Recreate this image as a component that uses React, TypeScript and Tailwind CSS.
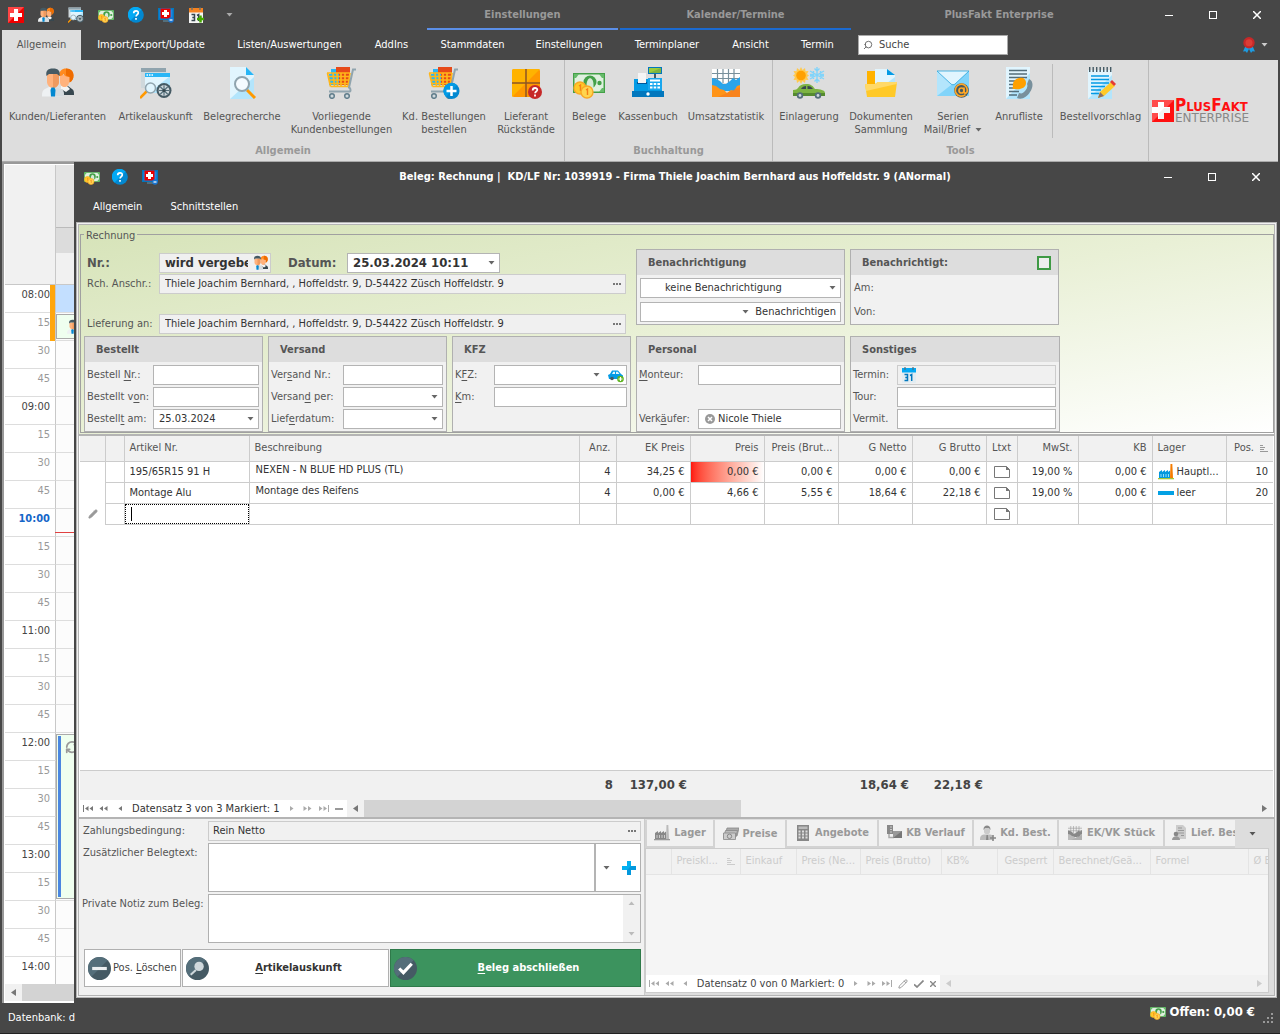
import type { ReactNode } from 'react';
import { RefreshCw, Search, Pencil } from 'lucide-react';

type P = { c?: string };

/* ---------- icons ---------- */

const Svg = ({ c = 'size-8', vb = '0 0 32 32', children }: { c?: string; vb?: string; children: ReactNode }) => (
  <svg viewBox={vb} className={c + ' shrink-0'} aria-hidden="true">{children}</svg>
);

const People = ({ c }: P) => (
  <Svg c={c}>
    <path d="M17 28l3-8 3-1h3l4 3c2 1 2 3 2 6z" fill="#37474f" />
    <path d="M19 19h6l3 3-4 3-5-3z" fill="#f5f5f5" />
    <path d="M18 8h9v7c0 3-2 5-4.500 5S18 18 18 15z" fill="#ffb27d" />
    <path d="M17 9c0-5 3-7.500 7-7.500 5 0 7.500 3 7.500 7 0 3-1 5.500-4 7V10c-3 0-5-1-6-3-1 1.500-2 2-4.500 2z" fill="#ff8a1f" />
    <path d="M24 1.500c5 0 7.500 3 7.500 7 0 3-1 5.500-4 7V10l-3.500-1.500z" fill="#ef6c00" />
    <path d="M0 29.500c0-5 1-7 4-8l4-2h6l4 2c3 1 4 3 4 8z" fill="#eef1f3" />
    <path d="M11 20l3-.5 4 2c3 1 4 3 4 8H11z" fill="#d5dbdf" />
    <path d="M5 7h12v8c0 3-3 6-6 6s-6-3-6-6z" fill="#ffb27d" />
    <path d="M11 7h6v8c0 3-3 6-6 6z" fill="#f09a5f" />
    <path d="M4.500 9C3.500 4 5.500 1.500 11 1.500S18.500 4 17.500 9L15 7H7z" fill="#455a64" />
    <path d="M9.500 20.500h3l1 2.500-.5 6.500h-4L8.500 23z" fill="#0288d1" />
  </Svg>
);

const Wheel = ({ x, y, r }: { x: number; y: number; r: number }) => (
  <g>
    <circle cx={x} cy={y} r={r} fill="#455a64" />
    <circle cx={x} cy={y} r={r * 0.72} fill="#cfd8dc" />
    <path d={`M${x - r * 0.7} ${y}h${r * 1.4}M${x} ${y - r * 0.7}v${r * 1.4}M${x - r * 0.5} ${y - r * 0.5}l${r} ${r}M${x + r * 0.5} ${y - r * 0.5}l${-r} ${r}`} stroke="#546e7a" strokeWidth="1.200" />
    <circle cx={x} cy={y} r={r * 0.2} fill="#37474f" />
  </g>
);

const Article = ({ c }: P) => (
  <Svg c={c}>
    <rect x="1" y="1" width="25" height="20" fill="#cfd8dc" />
    <rect x="1" y="1" width="25" height="4" fill="#90a4ae" />
    <rect x="5" y="6" width="25" height="20" fill="#e1f5fe" />
    <path d="M30 9v17H9z" fill="#b3e5fc" />
    <rect x="5" y="6" width="25" height="4" fill="#29b6f6" />
    <path d="M6.500 8h1.500m1 0h1.500m1 0H13" stroke="#fff" strokeWidth="1.500" />
    <path d="M7 24l-7 7" stroke="#ff9800" strokeWidth="2.500" />
    <circle cx="10.500" cy="21" r="5" fill="#e1f5fe" stroke="#90a4ae" strokeWidth="1.500" />
    <Wheel x={24} y={23.500} r={7.500} />
  </Svg>
);

const DocSearch = ({ c }: P) => (
  <Svg c={c}>
    <path d="M4 0h16l8 8v24H4z" fill="#e1f5fe" />
    <path d="M28 10v22H4z" fill="#b3e5fc" />
    <path d="M20 0l8 8h-8z" fill="#29b6f6" />
    <path d="M21 23l8 8" stroke="#ff9800" strokeWidth="3" />
    <circle cx="16" cy="17" r="7" fill="#f5fbff" stroke="#90a4ae" strokeWidth="2" />
  </Svg>
);

const CartBody = () => (
  <g>
    <path d="M5 2h10v6H5z" fill="#29b6f6" />
    <path d="M10 0h14v8H10z" fill="#e64a19" />
    <rect x="3" y="7" width="12" height="11" fill="#29b6f6" />
    <rect x="13" y="7" width="11" height="11" fill="#e64a19" />
    <path d="M1 6h23M2 9.500h22M3 13h20M4 16.500h19M4.500 19.500h18M1.500 6l3 13.500M7 6l1.500 13M11 6l.5 13M15 6v13M19 6v13M24 6l-2 13.500" stroke="#ffb61a" strokeWidth="1.700" fill="none" />
    <path d="M30 2.500h-3l-4 18c2 1 2 4 0 4H3" stroke="#90a4ae" strokeWidth="2" fill="none" />
    <circle cx="6" cy="29" r="2.300" fill="#cfd8dc" stroke="#607d8b" strokeWidth="1.500" />
    <circle cx="21" cy="29" r="2.300" fill="#cfd8dc" stroke="#607d8b" strokeWidth="1.500" />
  </g>
);
const Cart = ({ c }: P) => <Svg c={c}><CartBody /></Svg>;
const CartPlus = ({ c }: P) => (
  <Svg c={c}>
    <CartBody />
    <circle cx="23.500" cy="24" r="8" fill="#0288d1" />
    <path d="M18 30A8 8 0 0 1 29 18z" fill="#039be5" />
    <path d="M23.500 19v10M18.500 24h10" stroke="#fff" strokeWidth="2.500" />
  </Svg>
);

const BoxQ = ({ c }: P) => (
  <Svg c={c}>
    <rect x="2" y="2" width="28" height="28" rx="2" fill="#ff9800" />
    <path d="M2 30V4a2 2 0 0 1 2-2h26z" fill="#ffb300" />
    <path d="M16 2v28M2 16h28" stroke="#8d5524" strokeWidth="1.500" />
    <circle cx="25" cy="25" r="7" fill="#c62828" />
    <path d="M22.700 23.500c0-3.500 4.800-3 4.600-.5-.2 1.500-2.200 1.500-2.200 3.200M25 27.500v2" stroke="#fff" strokeWidth="1.800" fill="none" />
  </Svg>
);

const Money = ({ c }: P) => (
  <Svg c={c}>
    <rect x="0" y="6" width="32" height="20" fill="#43a047" />
    <rect x="1.500" y="7.500" width="29" height="17" fill="#dff0df" />
    <path d="M1 7h5l-3 4H1zM31 7h-5l3 4h2zM31 25h-5l3-4h2z" fill="#66bb6a" />
    <circle cx="17" cy="15" r="6.500" fill="#43a047" />
    <path d="M13.500 19c0-10 7-10 7-1v3h-7z" fill="#d5ead5" />
    <circle cx="26.500" cy="16" r="2.200" fill="#43a047" />
    <circle cx="7" cy="21" r="6" fill="#ffca28" stroke="#f9a825" strokeWidth="1.400" />
    <path d="M6 19l1.500-1v6" stroke="#f57f17" strokeWidth="1.400" fill="none" />
    <circle cx="14" cy="25" r="6" fill="#ffd54f" stroke="#f9a825" strokeWidth="1.400" />
    <path d="M13 23l1.500-1v6" stroke="#f57f17" strokeWidth="1.400" fill="none" />
  </Svg>
);

const Register = ({ c }: P) => (
  <Svg c={c}>
    <path d="M22 5h2v8h-2z" fill="#455a64" />
    <path d="M16 0h14v7H16z" fill="#0277bd" /><path d="M17 1h12v5H17z" fill="#9ccc3c" /><path d="M29 1v5H17z" fill="#7cb342" />
    <path d="M2 24V12h28v12z" fill="#039be5" />
    <path d="M0 24h32v6H0z" fill="#0277bd" />
    <path d="M16 11h14v12H16z" fill="#1aa7ee" />
    <path d="M18 13.500h10M18 17h2.500m1.200 0h2.500m1.200 0H28M18 20.500h2.500m1.200 0h2.500m1.200 0H28" stroke="#fff" strokeWidth="2" />
    <path d="M5 15h10v2H5z" fill="#01579b" /><path d="M6 6h8v10H6z" fill="#f5f5f5" />
    <circle cx="16" cy="27" r="1.700" fill="#fff" />
  </Svg>
);

const ChartIcon = ({ c, gray }: P & { gray?: boolean }) => (
  <Svg c={c}>
    <path d="M2 2h28v14H2z" fill={gray ? '#eee' : '#fff'} />
    <path d="M2 6.500h28M2 11.500h28M7.500 2v14M13 2v14M18.500 2v14M24 2v14" stroke={gray ? '#999' : '#78909c'} strokeWidth="1.200" />
    <path d="M2 11l4 1 4 2 3 3 3 0 4-3 3-3 3 2 4-3v14H2z" fill={gray ? '#888' : '#29a4ea'} />
    <path d="M2 18l4 1 4 3 4 1 3 3 4-3 3 1 3-5 3-1v12H2z" fill={gray ? '#bbb' : '#ff9418'} />
    <path d="M30 20v10H8z" fill={gray ? '#aaa' : '#f57c1f'} opacity=".7" />
  </Svg>
);

const SunCar = ({ c }: P) => (
  <Svg c={c}>
    <path d="M8 0l1.500 3L12 1l.5 3.300 3-.3-1.500 3 2 1.500-2 1.500 1.500 3-3-.3L12 16l-2.500-2L8 17l-1.500-3L4 16l-.5-3.300-3 .3L2 10 0 8.500 2 7 .5 4l3 .3L4 1l2.500 2z" fill="#ffc94d" />
    <circle cx="8" cy="8.500" r="4.800" fill="#ffa000" />
    <path d="M24 0v16M17 4l14 8M31 4l-14 8M21.500 1.500L24 4l2.500-2.500M21.500 14.500L24 12l2.500 2.500M17 7.500h3.500V4M31 7.500h-3.500V4M17 9h3.500v3M31 9h-3.500v3" stroke="#81d4fa" strokeWidth="1.400" fill="none" />
    <path d="M0 23c3 0 4-1 5-2 2-3 4-4 8-4 5 0 7 2 9 5 5 0 10 1 10 4v3H0z" fill="#7cb342" />
    <path d="M8 22c1-2 3-3 5-3v3zM14.500 19c3 0 4 1 5.500 3h-5.500z" fill="#37474f" />
    <path d="M0 26h32v3H0z" fill="#558b2f" />
    <circle cx="7" cy="28.500" r="3.200" fill="#546e7a" /><circle cx="7" cy="28.500" r="1.400" fill="#cfd8dc" />
    <circle cx="25" cy="28.500" r="3.200" fill="#546e7a" /><circle cx="25" cy="28.500" r="1.400" fill="#cfd8dc" />
  </Svg>
);

const Folder = ({ c }: P) => (
  <Svg c={c}>
    <path d="M2 4h9v24H2z" fill="#ffb300" />
    <path d="M10 2h12l8 6v14H10z" fill="#e1f5fe" /><path d="M30 10v12H14z" fill="#b3e5fc" />
    <path d="M22 2l8 6h-8z" fill="#039be5" />
    <path d="M0 17h10l3-2h19l-2 15H2z" fill="#ffc928" /><path d="M0 17h10l3-2h19l-.3 2L1 24z" fill="#ffd968" />
  </Svg>
);

const Mail = ({ c }: P) => (
  <Svg c={c}>
    <path d="M0 4h32v25H0z" fill="#81d4fa" />
    <path d="M0 29V4l32 0z" fill="#b3e5fc" />
    <path d="M0 4h32L18 17c-1 1-3 1-4 0z" fill="#e1f5fe" stroke="#29a4dc" strokeWidth=".8" />
    <circle cx="24.500" cy="23.500" r="5.800" fill="#455a64" stroke="#455a64" strokeWidth="3" />
    <path d="M28.500 27.500a6 6 0 1 1 1.800-4.500c0 4-3.300 4-3.300 1.500v-4" stroke="#ffa726" strokeWidth="1.700" fill="none" />
    <circle cx="24.500" cy="23.500" r="2.500" fill="none" stroke="#ffa726" strokeWidth="1.700" />
  </Svg>
);

const PhoneList = ({ c }: P) => (
  <Svg c={c}>
    <path d="M3 0h24v32H3z" fill="#e1f5fe" /><path d="M27 6v26H3z" fill="#b3e5fc" />
    <path d="M6 3.500h18M6 7h18M6 10.500h18M6 14h6M6 17.500h5M6 21h6M6 24.500h10M6 28h8" stroke="#546e7a" strokeWidth="1.300" />
    <path d="M16 11c4-1 7 1 7 5 0 5-6 7-11 6-3 0-3-1-2-2-1-5 2-8 6-9z" fill="#ffa000" />
    <path d="M26 12c5 2 4 9 1 13-3 5-8 8-13 6l2-5c3 1 4 0 6-2s3-5 2-7z" fill="#78909c" />
  </Svg>
);

const Notepad = ({ c }: P) => (
  <Svg c={c}>
    <path d="M3 3h24v29H3z" fill="#e1f5fe" /><path d="M27 8v24H3z" fill="#b3e5fc" />
    <path d="M4 2.500h23" stroke="#455a64" strokeWidth="5" strokeDasharray="1.400 2.100" />
    <path d="M6 9h18M6 12.500h18M6 16h18M6 19.500h14M6 23h10M6 26.500h8" stroke="#039be5" strokeWidth="1.300" />
    <path d="M13 31l2-6 11-10 4 4-11 10z" fill="#ffca28" /><path d="M13 31l2-6 4 4z" fill="#8d6e63" />
    <path d="M25 15l2-2 4 4-2 2z" fill="#e53935" />
  </Svg>
);

const Swiss = ({ c }: P) => (
  <Svg c={c} vb="0 0 16 16">
    <path d="M0 0h16v16H0z" fill="#f00000" /><path d="M0 0h16L0 16z" fill="#ff4545" />
    <path d="M6 2h4v4h4v4h-4v4H6v-4H2V6h4z" fill="#fff" />
  </Svg>
);

const Help = ({ c }: P) => (
  <Svg c={c} vb="0 0 16 16">
    <circle cx="8" cy="8" r="7.800" fill="#0288d1" /><path d="M2.500 13.500A7.800 7.800 0 1 1 13.500 2.500z" fill="#03a9f4" />
    <path d="M5.700 6.200c0-3.200 4.800-3 4.600-.3-.1 1.700-2.200 1.700-2.200 3.600M8 11v1.800" stroke="#fff" strokeWidth="1.700" fill="none" />
  </Svg>
);

const MonitorSwiss = ({ c }: P) => (
  <Svg c={c} vb="0 0 16 16">
    <path d="M0 1h16v12H0z" fill="#0277bd" /><path d="M1.500 2.500h13v9h-13z" fill="#1e88e5" />
    <path d="M2.500 1.500h10v10h-10z" fill="#e80000" /><path d="M6 3h3v2h2v3H9v2H6V8H4V5h2z" fill="#fff" />
    <path d="M5 13h6v2H5z" fill="#546e7a" /><circle cx="13" cy="13" r="2.800" fill="#1976d2" /><path d="M11.500 13h3" stroke="#fff" strokeWidth="1.200" />
  </Svg>
);

const CalIcon = ({ c, blue }: P & { blue?: boolean }) => (
  <Svg c={c} vb="0 0 16 16">
    <path d="M1 4h14v12H1z" fill={blue ? '#e3edf2' : '#f5f5f5'} />
    <path d="M1 1h14v4.500H1z" fill={blue ? '#03a9f4' : '#f58220'} />
    <path d="M4 0v3M12 0v3" stroke="#546e7a" strokeWidth="1.200" />
    <path d="M3.500 7.500h3v6h-3m.8-3h2.200M9 8.500l1.700-1v6.500" stroke={blue ? '#0277bd' : '#37474f'} strokeWidth="1.500" fill="none" />
    {!blue && <path d="M12.500 8.500v7M9 12h7" stroke="#43a800" strokeWidth="2.500" />}
  </Svg>
);

const Award = ({ c }: P) => (
  <Svg c={c} vb="0 0 16 16">
    <path d="M4.500 9L2 14.500l2.500-.3L6 16l2-4 2 4 1.500-1.800 2.500.3L11.500 9z" fill="#1e9be0" />
    <circle cx="8" cy="5.700" r="5.700" fill="#c62828" /><circle cx="8" cy="5.700" r="3.500" fill="#db3d36" />
  </Svg>
);

const CarBlue = ({ c }: P) => (
  <Svg c={c} vb="0 0 16 16">
    <path d="M0 8l2-1 2-3.500h6L13 7l2 1.500V12H1z" fill="#039be5" /><path d="M4 7l1.200-2.300H7V7zm4 0V4.700h1.800L11.500 7z" fill="#e1f5fe" />
    <circle cx="4" cy="11.500" r="1.800" fill="#455a64" /><circle cx="12.500" cy="12" r="3.300" fill="#5fb321" />
    <path d="M12.500 10v4M10.500 12h4" stroke="#fff" strokeWidth="1.200" />
  </Svg>
);

const Factory = ({ c, gray }: P & { gray?: boolean }) => (
  <Svg c={c} vb="0 0 16 16">
    <path d="M12.500 0h1.800l.7 14h-3z" fill={gray ? '#bbb' : '#f57c00'} />
    <path d="M1 14V8l3-2v2l3-2v2l3-2v2l2-1.500V14z" fill={gray ? '#888' : '#0398dd'} />
    <path d="M3 10v3m2.500-3v3M8 10v3m2.500-3v3" stroke={gray ? '#ccc' : '#8fdcff'} />
    <path d="M0 14h16v1.300H0z" fill={gray ? '#999' : '#a4c639'} />
  </Svg>
);

const Notes = ({ c }: P) => (
  <Svg c={c} vb="0 0 16 16">
    <path d="M4 2h12l-2 8H2z" fill="#aaa" stroke="#888" strokeWidth=".8" /><path d="M2.500 4.500h12l-2 7H.5z" fill="#bbb" stroke="#888" strokeWidth=".8" />
    <path d="M.5 7h12v6.500H.5z" fill="#ccc" stroke="#888" strokeWidth=".8" /><circle cx="6.500" cy="10.300" r="2.200" fill="none" stroke="#888" />
  </Svg>
);
const Calc = ({ c }: P) => (
  <Svg c={c} vb="0 0 16 16">
    <path d="M2 0h12v16H2z" fill="#888" /><path d="M3.500 1.500h9V4h-9z" fill="#bbb" />
    <path d="M3.500 6.500h9m-9 3h9m-9 3h9" stroke="#ddd" strokeWidth="1.800" strokeDasharray="2 1.500" />
  </Svg>
);
const Flow = ({ c }: P) => (
  <Svg c={c} vb="0 0 16 16">
    <path d="M1 0h6v9H1z" fill="#888" /><path d="M4 2h2m-2 2.500h2m-2 2.500h2" stroke="#ccc" /><path d="M3 9v3.500h5" stroke="#aaa" strokeWidth="1.500" fill="none" />
    <path d="M7 6h9v7H7z" fill="#999" /><path d="M16 6v7H7z" fill="#777" />
  </Svg>
);
const PersonAdd = ({ c }: P) => (
  <Svg c={c} vb="0 0 16 16">
    <path d="M4 3h6v4c0 3-6 3-6 0z" fill="#ccc" /><path d="M3.500 5c-.5-6 7.500-6 7 0l-1.500-2h-4z" fill="#888" />
    <path d="M0 15c0-4 1-5 4-5.500h6c3 .5 3.500 1.500 3.500 5.500z" fill="#bbb" /><path d="M6.500 10h1.400l.5 5H6z" fill="#888" />
    <path d="M13 10v6M10 13h6" stroke="#888" strokeWidth="1.600" />
  </Svg>
);
const DocPerson = ({ c }: P) => (
  <Svg c={c} vb="0 0 16 16">
    <path d="M5 0h7l3 3v11H5z" fill="#ccc" /><path d="M7 3h4M7 5.500h6M7 8h6m-3 2.500h3" stroke="#999" />
    <circle cx="5" cy="9" r="2.300" fill="#888" /><path d="M1 15c0-5 8-5 8 0z" fill="#999" />
  </Svg>
);

const LogoMark = ({ c }: P) => (
  <Svg c={c} vb="0 0 22 22">
    <path d="M0 0h22v22H0z" fill="#ff1010" /><path d="M0 0h22L0 22z" fill="#ff4c4c" />
    <path d="M6 2h6v5h6v6h-6v6H6v-6H0V7h6z" fill="#fff" /><path d="M12 8h6v5h-6v6H7v-6z" fill="#e9e9e9" opacity=".6" />
  </Svg>
);

const Down = ({ c = 'fill-[#666]' }: P) => (
  <svg viewBox="0 0 7 4" className={'h-1 w-[7px] shrink-0 ' + c} aria-hidden="true"><path d="M.5 0h6L3.500 3.500z" /></svg>
);
const Tri = ({ left, c = 'fill-[#777]' }: P & { left?: boolean }) => (
  <svg viewBox="0 0 5 7" className={'h-[7px] w-[5px] shrink-0 ' + c} aria-hidden="true"><path d={left ? 'M5 0v7L0 3.500z' : 'M0 0v7l5-3.500z'} /></svg>
);
const Nav = ({ kind, c = 'fill-[#777]' }: P & { kind: 'first' | 'prevp' | 'prev' | 'next' | 'nextp' | 'last' }) => {
  const d = {
    first: 'M0 0h1v7H0zM5.500 1v5L2 3.500zM10 1v5L6.500 3.500z',
    prevp: 'M4 1v5L.5 3.500zM8.500 1v5L5 3.500z',
    prev: 'M6 1v5L2.500 3.500z',
    next: 'M4 1v5l3.500-2.500z',
    nextp: 'M1.500 1v5L5 3.500zM6 1v5l3.500-2.500z',
    last: 'M0 1v5l3.500-2.500zM4.500 1v5L8 3.500zM9 0h1v7H9z',
  }[kind];
  return <svg viewBox="0 0 10 7" className={'h-[7px] w-[10px] ' + c} aria-hidden="true"><path d={d} /></svg>;
};
const SortIcon = () => (
  <svg viewBox="0 0 8 7" className="h-[7px] w-2 shrink-0 stroke-current" aria-hidden="true"><path d="M0 .5h3M0 2.500h5M0 4.500h4M0 6.500h8" /></svg>
);

/* ---------- controls ---------- */

const WinButtons = () => (
  <div className="flex h-full items-center">
    <button aria-label="Minimieren" className="flex h-full w-11 items-center justify-center"><span className="h-px w-2 bg-white" /></button>
    <button aria-label="Maximieren" className="flex h-full w-11 items-center justify-center"><span className="size-2 border border-white" /></button>
    <button aria-label="Schließen" className="flex h-full w-11 items-center justify-center">
      <svg viewBox="0 0 8 8" className="size-2 stroke-white" aria-hidden="true"><path d="M0 0l8 8M8 0L0 8" strokeWidth="1.500" /></svg>
    </button>
  </div>
);

const U = ({ t, u, r }: { t?: string; u: string; r: string }) => <>{t}<u className="underline-offset-2">{u}</u>{r}</>;

const Field = ({ id, label, lw, value, combo }: { id: string; label: ReactNode; lw: string; value?: string; combo?: boolean }) => (
  <div className="flex h-5 items-center">
    <label htmlFor={id} className={'shrink-0 whitespace-nowrap text-[#555] ' + lw}>{label}</label>
    {combo ? (
      <span className="relative flex min-w-0 flex-1">
        <select id={id} defaultValue={value} className="h-5 w-full appearance-none border border-[#b4b4b4] bg-white px-[5px]">
          <option>{value}</option>
        </select>
        <span className="pointer-events-none absolute top-2 right-[5px]"><Down /></span>
      </span>
    ) : (
      <input id={id} defaultValue={value} className="h-5 min-w-0 flex-1 border border-[#b4b4b4] bg-white px-[5px]" />
    )}
  </div>
);

const Panel = ({ title, w, extra, children }: { title: string; w: string; extra?: ReactNode; children: ReactNode }) => (
  <section className={'shrink-0 border border-[#b0b0b0] bg-[#f1f1f1] ' + w}>
    <div className="flex h-[25px] items-center justify-between bg-[#ddd] pr-[7px] pl-[11px] font-bold text-[#555]"><h2>{title}</h2>{extra}</div>
    {children}
  </section>
);

const RibbonItem = ({ w, icon, lines, drop }: { w: string; icon: ReactNode; lines: string[]; drop?: boolean }) => (
  <button className={'flex flex-col items-center pt-[7px] leading-[13px] whitespace-nowrap text-[#555] ' + w}>
    {icon}
    <span className="mt-[11px]">{lines[0]}</span>
    {lines[1] && <span className="flex items-center gap-[5px]">{lines[1]}{drop && <Down />}</span>}
  </button>
);

const RibbonGroup = ({ title, children, c = '' }: { title: string; children: ReactNode; c?: string }) => (
  <section className={'flex flex-col border-r border-[#bbb] ' + c}>
    <div className="flex h-[84px]">{children}</div>
    <h2 className="text-center leading-[14px] font-bold text-[#999]">{title}</h2>
  </section>
);

const AddressRow = ({ id, label, value }: { id: string; label: string; value: string }) => (
  <div className="flex items-center">
    <label htmlFor={id} className="w-[72px] shrink-0 whitespace-nowrap text-[#555]">{label}</label>
    <div className="flex h-5 min-w-0 flex-1 items-center border border-[#ccc] bg-[#f0f0f0] pr-1">
      <input id={id} defaultValue={value} readOnly className="min-w-0 flex-1 px-[5px]" />
      <button aria-label={label + ' auswählen'} className="flex gap-px">
        <i className="size-0.5 bg-[#777]" /><i className="size-0.5 bg-[#777]" /><i className="size-0.5 bg-[#777]" />
      </button>
    </div>
  </div>
);

/* ---------- calendar strip ---------- */

const hours = ['08:00', '09:00', '10:00', '11:00', '12:00', '13:00', '14:00'];
const slots = hours.flatMap((h) => (h === '14:00' ? [h] : [h, '15', '30', '45']));

const Calendar = () => (
  <aside className="flex w-[72px] shrink-0 flex-col overflow-hidden border-t-2 border-l-2 border-[#999] bg-white pt-px pl-px">
    <div className="flex h-[120px] shrink-0">
      <div className="w-[51px] border-r border-b border-[#c8c8c8] bg-[#f1f1f1]" />
      <div className="flex flex-1 flex-col border-b border-[#c8c8c8] bg-[#f1f1f1]">
        <div className="h-[63px] border-b border-[#bbb] bg-[#e4e4e4]" />
        <div className="h-[25px] bg-[#dcdcdc]" />
      </div>
    </div>
    <div className="relative h-[699px] shrink-0 overflow-hidden">
      {slots.map((s, i) => {
        const full = s.length > 2;
        const now = s === '10:00';
        return (
          <div key={i} className="flex h-7">
            <div className={'w-[51px] border-r border-b border-r-[#c8c8c8] border-b-[#ddd] pt-0.5 pr-[5px] text-right ' + (now ? 'font-bold text-[#1566c8]' : full ? 'text-[#444]' : 'text-[#999]')}>{s}</div>
            <div className={'flex-1 border-b border-[#ddd] ' + (i === 0 ? 'bg-[#c3dfff]' : 'bg-[#fcfcfc]')} />
          </div>
        );
      })}
      <div className="absolute top-0 left-[45px] h-14 w-[5px] bg-[#ffa60d]" />
      <div className="absolute top-[29px] left-[51px] h-[25px] w-10 overflow-hidden border border-[#aaa] bg-[#efffef] pt-1 pl-2.5"><People c="size-4" /></div>
      <div className="absolute top-[247px] left-[50px] h-px w-10 bg-[#e04040]" />
      <div className="absolute top-[449px] left-[51px] flex h-[165px] w-10 border border-[#aaa] bg-[#efffef] py-px pl-px">
        <span className="w-[3px] bg-[#4a86e0]" />
        <RefreshCw className="mt-1 ml-1 size-3.5 shrink-0 text-[#999]" strokeWidth={3} />
      </div>
    </div>
    <div className="flex h-[17px] items-center bg-[#d3d3d3]"><span className="flex h-full w-[17px] items-center justify-center bg-[#f1f1f1]"><Tri left /></span></div>
    <div className="h-0.5 bg-white" />
  </aside>
);

/* ---------- positions table ---------- */

const cols: [string, string, string][] = [
  ['', 'w-[25px]', 'l'], ['', 'w-[19px]', 'l'], ['Artikel Nr.', 'w-[125px]', 'l'], ['Beschreibung', '', 'l'], ['Anz.', 'w-[37px]', 'r'],
  ['EK Preis', 'w-[74px]', 'r'], ['Preis', 'w-[74px]', 'r'], ['Preis (Brut...', 'w-[74px]', 'r'], ['G Netto', 'w-[74px]', 'r'], ['G Brutto', 'w-[74px]', 'r'],
  ['Ltxt', 'w-[31px]', 'c'], ['MwSt.', 'w-[61px]', 'r'], ['KB', 'w-[74px]', 'r'], ['Lager', 'w-[74px]', 'l'], ['Pos.', 'w-[47px]', 'r'],
];
const align: Record<string, string> = { l: 'text-left', r: 'text-right', c: 'text-center' };

const rows = [
  ['195/65R15 91 H', 'NEXEN - N BLUE HD PLUS (TL)', '4', '34,25 €', '0,00 €', '0,00 €', '0,00 €', '0,00 €', '', '19,00 %', '0,00 €', 'Hauptl...', '10'],
  ['Montage Alu', 'Montage des Reifens', '4', '0,00 €', '4,66 €', '5,55 €', '18,64 €', '22,18 €', '', '19,00 %', '0,00 €', 'leer', '20'],
  ['', '', '', '', '', '', '', '', '', '', '', '', ''],
];

const ColGroup = () => <colgroup>{cols.map((c, i) => <col key={i} className={c[1]} />)}</colgroup>;

const Note = () => (
  <svg viewBox="0 0 16 12" className="mx-auto h-3 w-4" aria-hidden="true"><path d="M.5.5h12l3 3v8H.5z" fill="#fff" stroke="#777" /><path d="M12 0l4 4h-4z" fill="#777" /></svg>
);

const Positions = () => (
  <div className="flex flex-1 flex-col border-t-2 border-[#b4b4b4] bg-white px-px">
    <table className="w-full table-fixed border-collapse">
      <ColGroup />
      <thead>
        <tr className="h-[25px] bg-[#f1f1f1] text-[#555]">
          {cols.map(([t, , a], i) => (
            <th key={i} className={'overflow-hidden border-r border-b border-[#ccc] font-normal whitespace-nowrap last:border-r-0 ' + align[a] + (t === 'Ltxt' ? ' px-0' : ' px-[5px]')}>
              {t === 'Pos.' ? <span className="flex items-center justify-end gap-1.5 text-[#999]"><span className="text-[#555]">Pos.</span><SortIcon /></span> : t}
            </th>
          ))}
        </tr>
      </thead>
      <tbody>
        {rows.map((r, ri) => (
          <tr key={ri} className="h-[21px] text-[#333]">
            <td className="border-r border-[#ccc]">{ri === 2 && <Pencil className="ml-2 size-2.5 fill-[#999] text-[#999]" />}</td>
            <td className="border-r border-b border-[#ccc]" />
            {r.map((v, i) => {
              const a = cols[i + 2][2];
              return (
                <td
                  key={i}
                  className={
                    'overflow-hidden border-r border-b border-[#ccc] py-0 whitespace-nowrap last:border-r-0 ' + align[a] +
                    (i === 0 && ri === 2 ? ' p-0' : i === 1 ? ' px-1.5 pb-[3px]' : ' px-[5px]') +
                    (i === 4 && ri === 0 ? ' bg-linear-to-r from-[#f00] to-white bg-origin-border bg-no-repeat' : '')
                  }
                >
                  {i === 8 ? <Note /> : i === 11 && v ? (
                    <span className="flex items-center gap-[3px]">{ri === 0 ? <Factory c="size-4" /> : <span className="h-1 w-4 bg-[#03a1e4]" />}{v}</span>
                  ) : i === 0 && ri === 2 ? (
                    <span className="flex h-5 items-center border border-dotted border-black pl-[5px]"><span className="h-3.5 w-px bg-black" /></span>
                  ) : v}
                </td>
              );
            })}
          </tr>
        ))}
      </tbody>
    </table>
    <div className="flex-1" />
    <table className="w-full table-fixed border-collapse bg-[#f1f1f1]">
      <ColGroup />
      <tbody>
        <tr className="h-[30px] border-t border-[#ccc] text-[13px] font-bold text-[#444]">
          <td /><td /><td /><td />
          <td className="px-[3px] text-right">8</td>
          <td className="px-[3px] text-right whitespace-nowrap">137,00 €</td>
          <td /><td />
          <td className="px-[3px] text-right whitespace-nowrap">18,64 €</td>
          <td className="px-[3px] text-right whitespace-nowrap">22,18 €</td>
          <td /><td /><td /><td /><td />
        </tr>
      </tbody>
    </table>
    <div className="flex h-[17px] bg-[#f1f1f1]">
      <div className="flex w-[267px] shrink-0 items-center justify-between bg-white pr-1 pl-[3px] whitespace-nowrap text-[#333]">
        <button aria-label="Erster Datensatz"><Nav kind="first" /></button>
        <button aria-label="Vorherige Seite"><Nav kind="prevp" /></button>
        <button aria-label="Vorheriger Datensatz"><Nav kind="prev" /></button>
        <span>Datensatz 3 von 3 Markiert: 1</span>
        <button aria-label="Nächster Datensatz"><Nav kind="next" c="fill-[#aaa]" /></button>
        <button aria-label="Nächste Seite"><Nav kind="nextp" c="fill-[#aaa]" /></button>
        <button aria-label="Letzter Datensatz"><Nav kind="last" c="fill-[#aaa]" /></button>
        <button aria-label="Datensatz löschen" className="h-0.5 w-2 bg-[#999]" />
      </div>
      <div className="flex flex-1 items-center justify-between pr-1.5">
        <span className="flex h-full w-[17px] items-center justify-center"><Tri left /></span>
        <div className="flex h-full flex-1"><div className="h-full w-[42%] bg-[#d3d3d3]" /></div>
        <Tri />
      </div>
    </div>
  </div>
);

/* ---------- detail tabs ---------- */

const tabs: [string, string, ReactNode][] = [
  ['Lager', 'w-[68px]', <Factory c="size-4" gray />],
  ['Preise', 'w-[72px]', <Notes c="size-4" />],
  ['Angebote', 'w-[92px]', <Calc c="size-4" />],
  ['KB Verlauf', 'w-[95px]', <Flow c="size-4" />],
  ['Kd. Best.', 'w-[85px]', <PersonAdd c="size-4" />],
  ['EK/VK Stück', 'w-[106px]', <ChartIcon c="size-4" gray />],
  ['Lief. Best.', 'w-[90px]', <DocPerson c="size-4" />],
];
const priceCols: [string, string][] = [
  ['', 'w-[25px]'], ['Preiskl...', 'w-[69px]'], ['Einkauf', 'w-14'], ['Preis (Ne...', 'w-16'], ['Preis (Brutto)', 'w-[81px]'],
  ['KB%', 'w-14'], ['Gesperrt', 'w-14'], ['Berechnet/Geä...', 'w-[97px]'], ['Formel', 'w-[98px]'], ['Ø E', ''],
];

const Details = () => (
  <section className="flex min-w-0 flex-1 flex-col border-l border-[#ccc] bg-[#ddd] pr-[5px] pb-0.5">
    <div className="flex h-[29px] items-stretch pt-px">
      <div role="tablist" className="flex w-[590px] overflow-hidden">
        {tabs.map(([t, w, icon]) => (
          <button
            key={t}
            role="tab"
            aria-selected={t === 'Preise'}
            className={'flex shrink-0 items-center justify-center gap-1 border-l-2 border-[#d3d3d3] bg-[#f1f1f1] font-bold whitespace-nowrap text-[#999] ' + (t === 'Preise' ? '' : 'border-b-2 ') + w}
          >
            {icon}{t}
          </button>
        ))}
      </div>
      <button aria-label="Weitere Register" className="flex flex-1 items-center justify-center"><Down c="fill-[#555]" /></button>
    </div>
    <div className="flex flex-1 flex-col border border-[#ccc] bg-[#f5f5f5]">
      <table className="w-full table-fixed border-collapse">
        <colgroup>{priceCols.map((c, i) => <col key={i} className={c[1]} />)}</colgroup>
        <thead>
          <tr className="h-[25px] bg-[#f1f1f1] text-[#ccc]">
            {priceCols.map(([t], i) => (
              <th key={i} className={'overflow-hidden border-r border-b border-[#e4e4e4] px-[5px] font-normal whitespace-nowrap last:border-r-0 ' + (t === 'Gesperrt' ? 'text-right' : 'text-left')}>
                {t === 'Preiskl...' ? <span className="flex items-center justify-between">{t}<SortIcon /></span> : t}
              </th>
            ))}
          </tr>
        </thead>
      </table>
      <div className="flex-1" />
      <div className="flex h-[17px] bg-[#f1f1f1]">
        <div className="flex w-[294px] shrink-0 items-center justify-between bg-white pr-1 pl-[3px] whitespace-nowrap text-[#444]">
          <button aria-label="Erster Preis"><Nav kind="first" c="fill-[#aaa]" /></button>
          <button aria-label="Vorherige Preisseite"><Nav kind="prevp" c="fill-[#aaa]" /></button>
          <button aria-label="Vorheriger Preis"><Nav kind="prev" c="fill-[#aaa]" /></button>
          <span>Datensatz 0 von 0 Markiert: 0</span>
          <button aria-label="Nächster Preis"><Nav kind="next" c="fill-[#aaa]" /></button>
          <button aria-label="Nächste Preisseite"><Nav kind="nextp" c="fill-[#aaa]" /></button>
          <button aria-label="Letzter Preis"><Nav kind="last" c="fill-[#aaa]" /></button>
          <button aria-label="Bearbeiten"><Pencil className="size-2.5 text-[#888]" /></button>
          <button aria-label="Übernehmen"><svg viewBox="0 0 10 8" className="h-2 w-2.5 fill-none stroke-[#888]" aria-hidden="true"><path d="M0 4.500l3 2.500L9.500.5" strokeWidth="1.700" /></svg></button>
          <button aria-label="Verwerfen"><svg viewBox="0 0 6 6" className="size-1.5 stroke-[#888]" aria-hidden="true"><path d="M0 0l6 6M6 0L0 6" strokeWidth="1.400" /></svg></button>
        </div>
        <div className="flex flex-1 items-center justify-between px-1.5"><Tri left c="fill-[#ccc]" /><Tri c="fill-[#ccc]" /></div>
      </div>
    </div>
  </section>
);

/* ---------- lower left form ---------- */

const Badge = ({ children }: { children: ReactNode }) => (
  <svg viewBox="0 0 22 22" className="size-[23px] shrink-0" aria-hidden="true">
    <circle cx="11" cy="11" r="11" fill="#455a64" /><path d="M3.200 18.800A11 11 0 0 1 18.800 3.200z" fill="#546e7a" />{children}
  </svg>
);

const Closing = () => (
  <form className="flex w-[565px] shrink-0 flex-col gap-0.5 px-[3px] pt-0.5" onSubmit={(e) => e.preventDefault()}>
    <div className="flex h-5">
      <label htmlFor="zahlung" className="w-[126px] shrink-0 pl-px leading-5 text-[#555]">Zahlungsbedingung:</label>
      <div className="flex flex-1 items-center border border-[#ccc] bg-[#f1f1f1] pr-1">
        <input id="zahlung" defaultValue="Rein Netto" readOnly className="min-w-0 flex-1 px-1" />
        <button type="button" aria-label="Zahlungsbedingung auswählen" className="flex gap-px"><i className="size-0.5 bg-[#777]" /><i className="size-0.5 bg-[#777]" /><i className="size-0.5 bg-[#777]" /></button>
      </div>
    </div>
    <div className="flex h-[49px]">
      <label htmlFor="belegtext" className="w-[126px] shrink-0 pl-px leading-5 text-[#555]">Zusätzlicher Belegtext:</label>
      <div className="flex flex-1 border border-[#b0b0b0] bg-white">
        <textarea id="belegtext" className="flex-1 resize-none border-r-2 border-[#b4b4b4] p-1" />
        <div className="flex w-11 items-center justify-between pr-1 pl-[7px]">
          <button aria-label="Textauswahl" type="button"><Down /></button>
          <button aria-label="Text hinzufügen" type="button">
            <svg viewBox="0 0 14 14" className="size-3.5" aria-hidden="true"><path d="M5 0h4v5h5v4H9v5H5V9H0V5h5z" fill="#0398dd" /><path d="M5 0h4v5L5 9H0V5h5z" fill="#03b0f0" /></svg>
          </button>
        </div>
      </div>
    </div>
    <div className="flex h-[49px]">
      <label htmlFor="notiz" className="w-[126px] shrink-0 leading-5 whitespace-nowrap text-[#555]">Private Notiz zum Beleg:</label>
      <div className="flex flex-1 border border-[#b0b0b0] bg-white">
        <textarea id="notiz" className="flex-1 resize-none p-1" />
        <div className="flex w-[17px] flex-col items-center justify-between bg-[#f1f1f1] py-1.5">
          <span className="rotate-180"><Down c="fill-[#bbb]" /></span><Down c="fill-[#bbb]" />
        </div>
      </div>
    </div>
    <div className="mt-1 flex h-[38px] gap-px pl-0.5 whitespace-nowrap">
      <button className="flex w-[97px] items-center gap-0.5 border border-[#b0b0b0] bg-white pl-[3px] text-[#444]">
        <Badge><path d="M4 9.500h14v3H4z" fill="#eceff1" /></Badge><span><U t="Pos. " u="L" r="öschen" /></span>
      </button>
      <button className="flex w-[207px] items-center border border-[#b0b0b0] bg-white pl-[3px] font-bold text-[#333]">
        <Badge><circle cx="12.500" cy="9" r="4.500" fill="#cfd8dc" /><path d="M9.500 12.500L4.500 17" stroke="#cfd8dc" strokeWidth="2" /></Badge>
        <span className="flex-1 text-center"><U u="A" r="rtikelauskunft" /></span>
      </button>
      <button className="flex flex-1 items-center border border-[#2f7a4a] bg-[#3c935e] pl-[3px] font-bold text-white">
        <Badge><path d="M5 11l4 4 8-8.500" stroke="#fff" strokeWidth="3" fill="none" /></Badge>
        <span className="flex-1 text-center"><U u="B" r="eleg abschließen" /></span>
      </button>
    </div>
  </form>
);

/* ---------- receipt window ---------- */

const address = 'Thiele Joachim Bernhard, , Hoffeldstr. 9, D-54422 Züsch Hoffeldstr. 9';

const Receipt = () => (
  <main className="flex min-w-0 flex-1 flex-col bg-[#474747]">
    <header className="flex h-[30px] items-center">
      <div className="flex w-[130px] gap-3 pl-2.5">
        <button aria-label="Belege"><Money c="size-4" /></button>
        <button aria-label="Hilfe"><Help c="size-4" /></button>
        <button aria-label="Fernwartung"><MonitorSwiss c="ml-0.5 size-4" /></button>
      </div>
      <h1 className="flex-1 text-center font-bold whitespace-pre text-white">{'Beleg: Rechnung |  KD/LF Nr: 1039919 - Firma Thiele Joachim Bernhard aus Hoffeldstr. 9 (ANormal)'}</h1>
      <div className="h-full w-[134px]"><WinButtons /></div>
    </header>
    <nav className="flex h-[30px] items-center gap-7 pl-[19px] text-white"><button>Allgemein</button><button>Schnittstellen</button></nav>
    <div className="mr-[3px] mb-[5px] ml-0.5 flex flex-1 flex-col border border-[#b4b4b4] bg-[#f1f1f1] p-px">
      <div className="flex flex-1 flex-col border border-[#b4b4b4]">
        <div className="bg-linear-to-br from-[#d6e3b8] via-[#e9f0d6] to-white pt-px pb-px pl-px">
          <fieldset className="border border-[#a0a0a0] pl-[3px]">
            <legend className="px-0.5 pt-1 leading-3 text-[#555]">Rechnung</legend>
            <div className="flex gap-[5px] pt-[7px]">
              <div className="w-[547px] shrink-0 pt-1 pr-[5px] pl-[3px]">
                <div className="flex h-5 items-center text-[13px] font-bold">
                  <label htmlFor="nr" className="w-[72px] shrink-0 text-[#555]">Nr.:</label>
                  <div className="flex h-5 w-28 shrink-0 items-center border border-[#ccc] bg-[#f0f0f0] pr-0.5">
                    <input id="nr" defaultValue="wird vergebe" readOnly className="min-w-0 flex-1 pl-[5px] text-[#333]" />
                    <button aria-label="Kunde wählen" className="ml-1"><People c="size-4" /></button>
                  </div>
                  <label htmlFor="datum" className="ml-[17px] w-[59px] text-[#555]">Datum:</label>
                  <div className="flex h-5 w-[153px] items-center border border-[#b4b4b4] bg-white pr-1 text-[#333]">
                    <input id="datum" defaultValue="25.03.2024 10:11" className="min-w-0 flex-1 pl-[5px]" />
                    <Down />
                  </div>
                </div>
                <div className="flex flex-col gap-5 pt-px">
                  <AddressRow id="rch" label="Rch. Anschr.:" value={address} />
                  <AddressRow id="lief" label="Lieferung an:" value={address} />
                </div>
              </div>
              <Panel title="Benachrichtigung" w="h-[76px] w-[209px]">
                <div className="flex flex-col gap-1 px-[3px] pt-[3px]">
                  <div className="relative">
                    <select aria-label="Benachrichtigung" className="h-5 w-full appearance-none border border-[#b4b4b4] bg-white pl-6"><option>keine Benachrichtigung</option></select>
                    <span className="pointer-events-none absolute top-2 right-[5px]"><Down /></span>
                  </div>
                  <div className="flex h-5 items-center gap-1.5 border border-[#b4b4b4] bg-white pr-1">
                    <input aria-label="Empfänger" className="min-w-0 flex-1" /><Down />
                    <button>Benachrichtigen</button>
                  </div>
                </div>
              </Panel>
              <Panel title="Benachrichtigt:" w="h-[76px] w-[209px]" extra={<input type="checkbox" aria-label="Benachrichtigt" className="size-3.5 appearance-none border-2 border-[#3f9a45] bg-[#eee]" />}>
                <dl className="pl-[3px] text-[#555]"><dt className="pt-[5px] leading-4">Am:</dt><dt className="pt-2 leading-4">Von:</dt></dl>
              </Panel>
            </div>
            <div className="mt-0.5 flex gap-[5px]">
              <Panel title="Bestellt" w="w-[179px]">
                <div className="flex flex-col gap-0.5 pt-[3px] pr-[3px] pb-0.5 pl-0.5">
                  <Field id="bnr" lw="w-[66px]" label={<U t="Bestell " u="N" r="r.:" />} />
                  <Field id="bvon" lw="w-[66px]" label={<U t="Bestellt v" u="o" r="n:" />} />
                  <Field id="bam" lw="w-[66px]" label={<U t="Bestell" u="t" r=" am:" />} value="25.03.2024" combo />
                </div>
              </Panel>
              <Panel title="Versand" w="w-[179px]">
                <div className="flex flex-col gap-0.5 pt-[3px] pr-[3px] pb-0.5 pl-0.5">
                  <Field id="vnr" lw="w-[72px]" label={<U t="Ver" u="s" r="and Nr.:" />} />
                  <Field id="vper" lw="w-[72px]" label={<U t="Versan" u="d" r=" per:" />} combo />
                  <Field id="ldat" lw="w-[72px]" label={<U t="Lief" u="e" r="rdatum:" />} combo />
                </div>
              </Panel>
              <Panel title="KFZ" w="w-[179px]">
                <div className="flex flex-col gap-0.5 pt-[3px] pr-[3px] pb-0.5 pl-0.5">
                  <div className="flex h-5 items-center">
                    <label htmlFor="kfz" className="w-[39px] shrink-0 text-[#555]"><U t="K" u="F" r="Z:" /></label>
                    <div className="flex h-5 min-w-0 flex-1 items-center border border-[#b4b4b4] bg-white pr-0.5">
                      <input id="kfz" className="min-w-0 flex-1 px-1" /><Down />
                      <button aria-label="Fahrzeug anlegen" className="ml-2"><CarBlue c="size-4" /></button>
                    </div>
                  </div>
                  <Field id="km" lw="w-[39px]" label={<U u="K" r="m:" />} />
                </div>
              </Panel>
              <Panel title="Personal" w="w-[209px]">
                <div className="flex flex-col gap-6 pt-[3px] pr-[3px] pb-0.5 pl-0.5">
                  <Field id="monteur" lw="w-[59px]" label={<U u="M" r="onteur:" />} />
                  <div className="flex h-5 items-center">
                    <label htmlFor="verk" className="w-[59px] shrink-0 text-[#555]"><U t="Verk" u="ä" r="ufer:" /></label>
                    <div className="flex h-5 min-w-0 flex-1 items-center gap-[3px] border border-[#b4b4b4] bg-white pl-1.5">
                      <button aria-label="Verkäufer entfernen" className="shrink-0">
                        <svg viewBox="0 0 10 10" className="size-2.5" aria-hidden="true"><circle cx="5" cy="5" r="5" fill="#999" /><path d="M3 3l4 4M7 3L3 7" stroke="#fff" strokeWidth="1.500" /></svg>
                      </button>
                      <input id="verk" defaultValue="Nicole Thiele" className="min-w-0 flex-1" />
                    </div>
                  </div>
                </div>
              </Panel>
              <Panel title="Sonstiges" w="w-[210px]">
                <div className="flex flex-col gap-0.5 pt-[3px] pr-[3px] pb-0.5 pl-0.5">
                  <div className="flex h-5 items-center">
                    <label htmlFor="termin" className="w-[44px] shrink-0 text-[#555]">Termin:</label>
                    <div className="flex h-5 min-w-0 flex-1 items-center border border-[#ccc] bg-[#f0f0f0] pl-[3px]">
                      <CalIcon c="size-4" blue /><input id="termin" readOnly className="min-w-0 flex-1" />
                    </div>
                  </div>
                  <Field id="tour" lw="w-[44px]" label="Tour:" />
                  <Field id="vermit" lw="w-[44px]" label="Vermit." />
                </div>
              </Panel>
            </div>
          </fieldset>
        </div>
        <Positions />
        <div className="flex h-[178px] border-t-2 border-[#b4b4b4]"><Closing /><Details /></div>
      </div>
    </div>
  </main>
);

/* ---------- application ---------- */

const mainTabs: [string, string][] = [
  ['Import/Export/Update', 'w-[140px]'], ['Listen/Auswertungen', 'w-[137px]'], ['AddIns', 'w-[67px]'], ['Stammdaten', 'w-[95px]'],
  ['Einstellungen', 'w-[98px]'], ['Terminplaner', 'w-[98px]'], ['Ansicht', 'w-[69px]'], ['Termin', 'w-[65px]'],
];

export default function App() {
  return (
    <div className="flex min-h-screen flex-col border-b border-[#222] bg-[#474747] font-['DejaVu_Sans_Condensed','DejaVu_Sans','Noto_Sans',sans-serif] text-[11px] leading-4 text-[#333]">
      <header className="flex h-[30px] items-center">
        <div className="flex w-[427px] shrink-0 items-center gap-3.5 pl-2">
          <button aria-label="PlusFakt"><Swiss c="size-4" /></button>
          <button aria-label="Kunden"><People c="size-4" /></button>
          <button aria-label="Artikel"><Article c="size-4" /></button>
          <button aria-label="Belege öffnen"><Money c="size-4" /></button>
          <button aria-label="Hilfe öffnen"><Help c="size-4" /></button>
          <button aria-label="Fernwartung starten"><MonitorSwiss c="size-4" /></button>
          <button aria-label="Neuer Termin"><CalIcon c="size-4" /></button>
          <button aria-label="Symbolleiste anpassen" className="ml-2"><Down c="fill-[#aaa]" /></button>
        </div>
        <div className="h-full w-[191px] shrink-0 border-b-2 border-[#5b8fe8] text-center leading-[30px] font-bold text-[#999]">Einstellungen</div>
        <div className="ml-0.5 h-full w-[231px] shrink-0 border-b-2 border-[#1b6ad0] text-center leading-[30px] font-bold text-[#999]">Kalender/Termine</div>
        <div className="flex-1 text-center font-bold text-[#999]">PlusFakt Enterprise</div>
        <div className="h-full w-[133px]"><WinButtons /></div>
      </header>
      <nav className="flex h-[30px] shrink-0 items-center pl-0.5 whitespace-nowrap text-white">
        <button className="h-full w-[79px] bg-[#ddd] text-[#555]">Allgemein</button>
        {mainTabs.map(([t, w]) => <button key={t} className={'h-full ' + w}>{t}</button>)}
        <label className="ml-2 flex h-5 w-[150px] items-center gap-1.5 border border-[#aaa] bg-white px-1 text-[#444]">
          <Search className="size-2.5 shrink-0 -scale-x-100 text-[#555]" />
          <input aria-label="Suche" defaultValue="Suche" className="min-w-0 flex-1" />
        </label>
        <button aria-label="Design" className="ml-auto flex items-center gap-1 pr-3"><Award c="size-4" /><Down c="fill-[#ccc]" /></button>
      </nav>
      <div className="mx-0.5 flex h-[102px] shrink-0 border-b border-[#aaa] bg-[#ddd]">
        <RibbonGroup title="Allgemein" c="w-[563px]">
          <RibbonItem w="w-[111px]" icon={<People />} lines={['Kunden/Lieferanten']} />
          <RibbonItem w="w-[85px]" icon={<Article />} lines={['Artikelauskunft']} />
          <RibbonItem w="w-[88px]" icon={<DocSearch />} lines={['Belegrecherche']} />
          <RibbonItem w="w-[111px]" icon={<Cart />} lines={['Vorliegende', 'Kundenbestellungen']} />
          <RibbonItem w="w-[94px]" icon={<CartPlus />} lines={['Kd. Bestellungen', 'bestellen']} />
          <RibbonItem w="w-[70px]" icon={<BoxQ />} lines={['Lieferant', 'Rückstände']} />
        </RibbonGroup>
        <RibbonGroup title="Buchhaltung" c="w-[208px]">
          <RibbonItem w="w-12" icon={<Money />} lines={['Belege']} />
          <RibbonItem w="w-[70px]" icon={<Register />} lines={['Kassenbuch']} />
          <RibbonItem w="w-[86px]" icon={<ChartIcon />} lines={['Umsatzstatistik']} />
        </RibbonGroup>
        <RibbonGroup title="Tools" c="w-[376px]">
          <RibbonItem w="w-[72px]" icon={<SunCar />} lines={['Einlagerung']} />
          <RibbonItem w="w-[72px]" icon={<Folder />} lines={['Dokumenten', 'Sammlung']} />
          <RibbonItem w="w-[72px]" icon={<Mail />} lines={['Serien', 'Mail/Brief']} drop />
          <RibbonItem w="w-[60px]" icon={<PhoneList />} lines={['Anrufliste']} />
          <div className="mt-1 ml-[3px] h-[74px] w-px bg-[#bbb]" />
          <RibbonItem w="w-[95px]" icon={<Notepad />} lines={['Bestellvorschlag']} />
        </RibbonGroup>
        <div className="flex items-center pl-[3px]">
          <LogoMark c="size-[22px]" />
          <div className="pl-px">
            <div className="text-[17px] leading-[13px] font-bold text-[#ff1010]">P<span className="text-[13px]">LUS</span>F<span className="text-[13px]">AKT</span></div>
            <div className="font-['DejaVu_Sans',sans-serif] text-[12px] leading-[10px] text-[#888]">ENTERPRISE</div>
          </div>
        </div>
      </div>
      <div className="ml-0.5 flex flex-1">
        <Calendar />
        <Receipt />
      </div>
      <footer className="flex h-[30px] shrink-0 items-center justify-between pr-[7px] pl-2 text-white">
        <span>Datenbank: d</span>
        <div className="flex items-center gap-1 pb-3 text-[13px] font-bold">
          <Money c="size-4" />Offen: 0,00 €
          <svg viewBox="0 0 10 10" className="mt-3 ml-1 size-2.5 fill-[#999]" aria-hidden="true"><path d="M8 0h2v2H8zM8 4h2v2H8zM8 8h2v2H8zM4 4h2v2H4zM4 8h2v2H4zM0 8h2v2H0z" /></svg>
        </div>
      </footer>
    </div>
  );
}
